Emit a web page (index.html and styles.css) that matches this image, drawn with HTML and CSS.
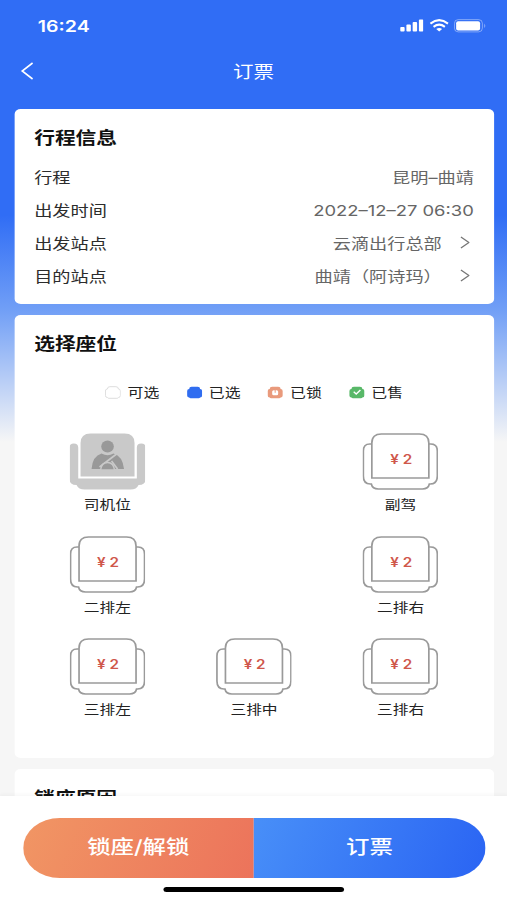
FILE: index.html
```
<!DOCTYPE html>
<html lang="zh-CN">
<head>
    <meta charset="UTF-8">
    <meta name="viewport" content="width=device-width, initial-scale=1.0">
    <title>订票</title>
    <link rel="stylesheet" href="styles.css">
</head>
<body>
    <!-- shared seat shapes -->
    <svg class="defs" width="0" height="0">
        <symbol id="seat" viewBox="0 0 76 57" preserveAspectRatio="none">
            <g fill="none" stroke="#9a9a9a" stroke-width="1.7">
                <path d="M9.5 45V10Q9.5 1 19 1H57Q66.5 1 66.5 10V45Z"/>
                <path d="M9.5 11H7.5Q1 11 1 18V43Q1 51 8 51H9Q10 56 16 56H60Q66 56 67 51H68Q75 51 75 43V18Q75 11 68.500 11H66.500"/>
            </g>
        </symbol>
        <symbol id="driver" viewBox="0 0 76 57" preserveAspectRatio="none">
            <path fill="#c9c9c9" d="M11 43.500V10Q11 .5 21 .5H55Q65 .5 65 10V43.500Z"/>
            <path fill="#c9c9c9" d="M0 14.500Q0 10.500 4.300 10.500T8.700 14.500V45.500H67.300V14.500Q67.300 10.500 71.700 10.500T76 14.500V46Q76 52 69 52Q67 56.500 61 56.500H15Q9 56.500 7 52Q0 52 0 46Z"/>
            <ellipse cx="38" cy="13.500" rx="6.300" ry="6" fill="#999"/>
            <path fill="#999" d="M22 36Q23 23 32 20.500Q38 24 44 20.500Q53 23 54.500 36Z"/>
            <path d="M30 34L47 21M42 28L48 36" stroke="#c9c9c9" stroke-width="1.700" fill="none"/>
            <path d="M31 37Q32 29.500 38 29.500T45 37Z" fill="#999" stroke="#c9c9c9" stroke-width="1.500"/>
        </symbol>
        <symbol id="mini" viewBox="0 0 16 13" preserveAspectRatio="none">
            <path d="M2.500 3Q2.500 .7 5 .7H11Q13.500 .7 13.500 3Q15.500 3 15.500 5V9.500Q15.500 11.500 13.500 11.500Q13 12.300 12 12.300H4Q3 12.300 2.500 11.500Q.5 11.500 .5 9.500V5Q.5 3 2.500 3Z"/>
        </symbol>
        <symbol id="arrow" viewBox="0 0 10 13" preserveAspectRatio="none">
            <path d="M1 1L9 6.500L1 12" fill="none" stroke="#777" stroke-width="1.400"/>
        </symbol>
    </svg>

    <div class="screen">
        <div class="status">
            <span class="time">16:24</span>
            <div class="status-icons">
                <svg class="signal" viewBox="0 0 24 13" preserveAspectRatio="none" fill="#fff">
                    <rect x="0" y="8" width="4.500" height="4.500" rx="1"/>
                    <rect x="6.300" y="5.500" width="4.500" height="7" rx="1"/>
                    <rect x="12.600" y="3" width="4.500" height="9.500" rx="1"/>
                    <rect x="18.900" y="0.500" width="4.500" height="12" rx="1"/>
                </svg>
                <svg class="wifi" viewBox="0 0 20 13" preserveAspectRatio="none" fill="none" stroke="#fff" stroke-width="2.100">
                    <path d="M1 4.600Q10 -2.300 19 4.600"/>
                    <path d="M4.200 7.800Q10 3.500 15.800 7.800"/>
                    <path d="M7 9.900Q10 7.900 13 9.900L10 12.500Z" fill="#fff" stroke="none"/>
                </svg>
                <svg class="battery" viewBox="0 0 33 14" preserveAspectRatio="none">
                    <rect x=".6" y=".6" width="28" height="12.300" rx="3.800" fill="none" stroke="#fff" stroke-opacity=".4"/>
                    <rect x="2.300" y="2.200" width="24" height="9.200" rx="2" fill="#fff"/>
                    <path d="M30.500 4.500Q32.500 6.800 30.500 9Z" fill="#fff" fill-opacity=".5"/>
                </svg>
            </div>
        </div>

        <div class="nav">
            <svg class="back" viewBox="0 0 13 18" preserveAspectRatio="none">
                <path d="M12 1L1.500 9L12 17" fill="none" stroke="#fff" stroke-width="1.600"/>
            </svg>
            <span class="nav-title">订票</span>
        </div>

        <div class="content">
            <div class="card trip">
                <h2>行程信息</h2>
                <div class="row"><span>行程</span><span class="value">昆明–曲靖</span></div>
                <div class="row"><span>出发时间</span><span class="value date">2022–12–27 06:30</span></div>
                <div class="row"><span>出发站点</span><span class="value">云滴出行总部<svg class="arrow"><use href="#arrow"/></svg></span></div>
                <div class="row"><span>目的站点</span><span class="value">曲靖（阿诗玛）<svg class="arrow"><use href="#arrow"/></svg></span></div>
            </div>

            <div class="card seats">
                <h2>选择座位</h2>
                <div class="legend">
                    <div class="legend-item"><svg class="mini free"><use href="#mini"/></svg>可选</div>
                    <div class="legend-item"><svg class="mini picked"><use href="#mini"/></svg>已选</div>
                    <div class="legend-item">
                        <svg class="mini locked" viewBox="0 0 16 13" preserveAspectRatio="none">
                            <use href="#mini" width="16" height="13"/>
                            <rect x="5" y="4.300" width="6" height="5" rx="1.500" fill="#fff"/>
                            <path d="M8 3V6.800" stroke="#e99a7c" stroke-width="1"/>
                        </svg>已锁
                    </div>
                    <div class="legend-item">
                        <svg class="mini sold" viewBox="0 0 16 13" preserveAspectRatio="none">
                            <use href="#mini" width="16" height="13"/>
                            <path d="M4.800 5.800L7.300 8L11.500 4" fill="none" stroke="#fff" stroke-width="1.400"/>
                        </svg>已售
                    </div>
                </div>
                <div class="grid">
                    <div class="seat"><svg><use href="#driver"/></svg><span>司机位</span></div>
                    <div class="seat right"><svg><use href="#seat"/></svg><b>¥ 2</b><span>副驾</span></div>
                    <div class="seat"><svg><use href="#seat"/></svg><b>¥ 2</b><span>二排左</span></div>
                    <div class="seat right"><svg><use href="#seat"/></svg><b>¥ 2</b><span>二排右</span></div>
                    <div class="seat"><svg><use href="#seat"/></svg><b>¥ 2</b><span>三排左</span></div>
                    <div class="seat"><svg><use href="#seat"/></svg><b>¥ 2</b><span>三排中</span></div>
                    <div class="seat"><svg><use href="#seat"/></svg><b>¥ 2</b><span>三排右</span></div>
                </div>
            </div>

            <div class="card reason">
                <h2>锁座原因</h2>
            </div>
        </div>

        <div class="footer">
            <div class="buttons">
                <button class="btn lock">锁座/解锁</button>
                <button class="btn book">订票</button>
            </div>
            <div class="home-bar"></div>
        </div>
    </div>
</body>
</html>
```
FILE: styles.css
```
* {
    box-sizing: border-box;
}

body {
    margin: 0;
    width: 507px;
    height: 900px;
    overflow: hidden;
    font-family: Inter, 'Noto Sans CJK SC', sans-serif;
}

.defs {
    display: none;
}

/* wide display: everything is stretched sideways */
.screen {
    display: flex;
    flex-direction: column;
    width: 415.6px;
    height: 900px;
    overflow: hidden;
    transform: scaleX(1.22);
    transform-origin: 0 0;
    background: linear-gradient(#306df5 0, #306df5 215px, #719ff6 310px, #f6f6f6 442px);
}

.status {
    display: flex;
    justify-content: space-between;
    align-items: center;
    height: 51px;
    padding: 0 16.5px 0 31px;
    flex-shrink: 0;
}

.time {
    font-size: 16px;
    font-weight: 600;
    color: #fff;
}

.status-icons {
    display: flex;
    align-items: center;
    gap: 4.5px;
}

.signal {
    width: 19.5px;
    height: 13px;
}

.wifi {
    width: 16px;
    height: 13px;
}

.battery {
    width: 27px;
    height: 14px;
}

.nav {
    display: grid;
    grid-template-columns: 40px 1fr 40px;
    align-items: center;
    height: 40px;
    margin-bottom: 18px;
    flex-shrink: 0;
}

.back {
    width: 10.5px;
    height: 18px;
    margin-left: 17px;
}

.nav-title {
    text-align: center;
    font-size: 16.8px;
    color: #fff;
}

.content {
    flex: 1;
    min-height: 0;
    overflow: hidden;
    padding: 0 11px 0 11.8px;
}

.card {
    background: #fff;
    border-radius: 5px;
    padding: 14px 16.2px 0;
    margin-bottom: 11px;
}

.trip {
    height: 195px;
}

.seats {
    height: 443px;
}

.reason {
    height: 120px;
}

h2 {
    margin: 0 0 7px;
    font-size: 17px;
    line-height: 30px;
    font-weight: 700;
    color: #111;
}

.row {
    display: flex;
    justify-content: space-between;
    align-items: center;
    height: 33px;
    font-size: 14.9px;
    color: #2c2c2c;
}

.value {
    display: flex;
    align-items: center;
    color: #666;
}

.date {
    font-size: 15.1px;
    padding-top: 2px;
}

.arrow {
    width: 8.2px;
    height: 13px;
    margin: 0 3.3px 0 14.8px;
}

.legend {
    display: flex;
    justify-content: center;
    gap: 22px;
    margin-top: 23px;
    font-size: 13px;
    line-height: 20px;
    color: #222;
}

.legend-item {
    display: flex;
    align-items: center;
    gap: 5.5px;
}

.mini {
    width: 13.1px;
    height: 13px;
}

.free {
    fill: #fff;
    stroke: #ddd;
}

.picked {
    fill: #306df0;
}

.locked {
    fill: #e99a7c;
}

.sold {
    fill: #58b868;
}

.grid {
    display: grid;
    grid-template-columns: repeat(3, 1fr);
    grid-auto-rows: 102.5px;
    margin-top: 31px;
}

.seat {
    position: relative;
    display: flex;
    flex-direction: column;
    align-items: center;
    font-size: 12.9px;
    line-height: 20px;
    color: #222;
}

.seat.right {
    grid-column: 3;
}

.seat svg {
    width: 62.3px;
    height: 57px;
    margin-bottom: 5px;
}

/* price sits on the seat back */
.seat b {
    position: absolute;
    top: 17px;
    left: 1px;
    right: 0;
    text-align: center;
    font-size: 12.5px;
    font-weight: 600;
    color: #cf574b;
}

.footer {
    height: 104px;
    padding-top: 22px;
    background: #fff;
    box-shadow: 0 -2px 3px rgba(0, 0, 0, 0.03);
    flex-shrink: 0;
    z-index: 1;
}

.buttons {
    display: flex;
    height: 60px;
    margin: 0 18px 0 18.6px;
    border-radius: 30px;
    overflow: hidden;
}

.btn {
    flex: 1;
    border: none;
    padding: 0 0 4px;
    font-family: inherit;
    font-size: 19.2px;
    font-weight: 500;
    color: #fff;
}

.lock {
    background: linear-gradient(110deg, #f19664, #ec735b);
}

.book {
    background: linear-gradient(110deg, #488ff8, #2a64f3);
}

.home-bar {
    width: 148px;
    height: 5px;
    margin: 9px auto 0;
    border-radius: 3px;
    background: #000;
}
```
